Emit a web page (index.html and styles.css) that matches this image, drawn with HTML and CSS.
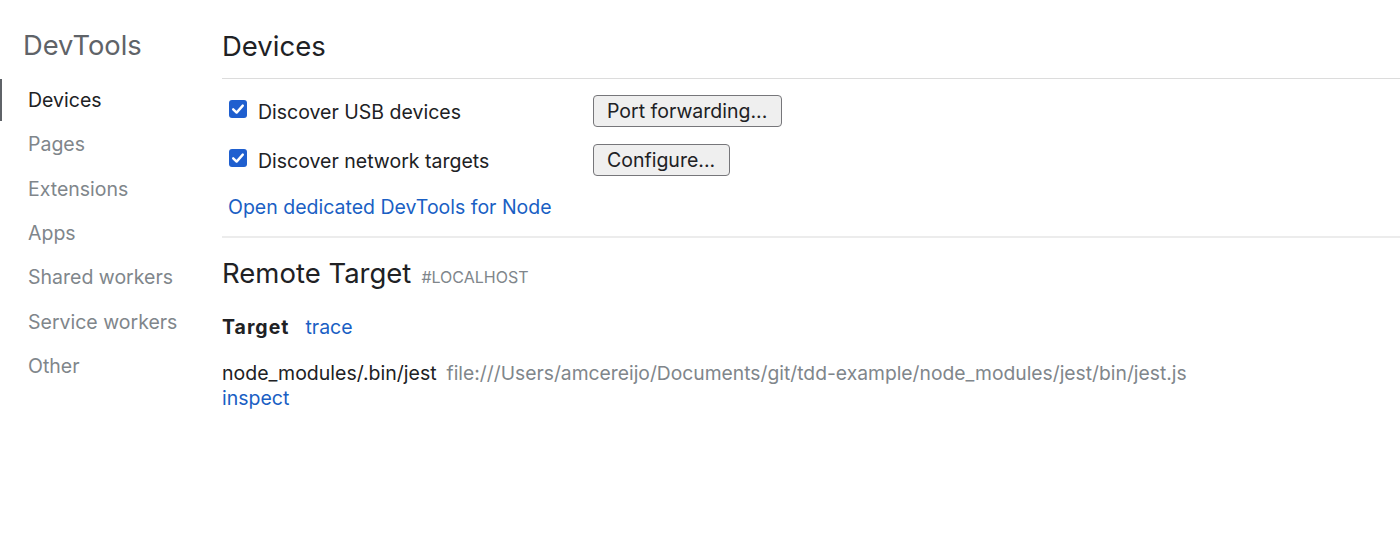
FILE: index.html
```html
<!DOCTYPE html>
<html>
<head>
<meta charset="utf-8">
<link rel="stylesheet" href="styles.css">
</head>
<body>
<div class="app">
  <aside class="sidebar">
    <h1 class="brand">DevTools</h1>
    <nav class="nav">
      <div class="nav-item active">Devices</div>
      <div class="nav-item">Pages</div>
      <div class="nav-item">Extensions</div>
      <div class="nav-item">Apps</div>
      <div class="nav-item">Shared workers</div>
      <div class="nav-item">Service workers</div>
      <div class="nav-item">Other</div>
    </nav>
  </aside>
  <main class="main">
    <header class="page-header">
      <h1 class="page-title">Devices</h1>
    </header>
    <div class="options">
      <div class="option-row">
        <label class="check">
          <span class="box"><svg viewBox="0 0 18 18" width="18" height="18"><path d="M4.2 9.3 L7.6 12.6 L13.8 5.6" fill="none" stroke="#fff" stroke-width="2.4" stroke-linecap="round" stroke-linejoin="round"/></svg></span>
          <span class="check-label">Discover USB devices</span>
        </label>
        <button class="btn">Port forwarding...</button>
      </div>
      <div class="option-row">
        <label class="check">
          <span class="box"><svg viewBox="0 0 18 18" width="18" height="18"><path d="M4.2 9.3 L7.6 12.6 L13.8 5.6" fill="none" stroke="#fff" stroke-width="2.4" stroke-linecap="round" stroke-linejoin="round"/></svg></span>
          <span class="check-label">Discover network targets</span>
        </label>
        <button class="btn">Configure...</button>
      </div>
      <a class="link node-link">Open dedicated DevTools for Node</a>
    </div>
    <section class="remote">
      <h2 class="remote-title">Remote Target <span class="host">#LOCALHOST</span></h2>
      <div class="target-head">
        <span class="target-label">Target</span>
        <a class="link">trace</a>
      </div>
      <div class="target">
        <div class="target-line">
          <span class="target-name">node_modules/.bin/jest</span>
          <span class="target-url">file:///Users/amcereijo/Documents/git/tdd-example/node_modules/jest/bin/jest.js</span>
        </div>
        <a class="link">inspect</a>
      </div>
    </section>
  </main>
</div>
</body>
</html>
```
FILE: styles.css
```css
* { box-sizing: border-box; }
html, body {
  margin: 0;
  padding: 0;
  background: #ffffff;
}
body {
  font-family: Inter, "Liberation Sans", Arial, sans-serif;
  color: #202124;
  font-size: 19.5px;
}
.app {
  display: flex;
  height: 559px;
}
.sidebar {
  width: 222px;
  flex: none;
  padding-top: 30px;
}
.brand {
  margin: 0 0 17px 0;
  padding-left: 23px;
  font-size: 27.3px;
  line-height: 32px;
  font-weight: normal;
  color: #5f6368;
}
.nav {
  display: flex;
  flex-direction: column;
  gap: 2.35px;
}
.nav-item {
  height: 42px;
  display: flex;
  align-items: center;
  padding-left: 26px;
  border-left: 2px solid transparent;
  color: #80868b;
  font-size: 19.5px;
}
.nav-item.active {
  border-left-color: #5f6368;
  color: #202124;
}
.main {
  flex: 1;
  padding-top: 30px;
}
.page-header {
  padding-bottom: 16px;
  border-bottom: 1px solid #dcdcdc;
}
.page-title {
  margin: 0;
  font-size: 27.5px;
  line-height: 32px;
  font-weight: normal;
  color: #202124;
}
.options {
  padding-top: 16px;
  padding-bottom: 17px;
  border-bottom: 2px solid #ececec;
  display: flex;
  flex-direction: column;
}
.option-row {
  display: grid;
  grid-template-columns: 371px auto;
  align-items: center;
  justify-items: start;
  margin-bottom: 17px;
}
.option-row + .option-row { margin-bottom: 19px; }
.check {
  display: flex;
  align-items: center;
  padding-left: 7px;
}
.box {
  width: 18px;
  height: 18px;
  border-radius: 3px;
  background: #1f5fcf;
  display: flex;
  margin-right: 11px;
  position: relative;
  top: -2px;
}
.check-label {
  line-height: 24px;
  position: relative;
  top: 1px;
}
.btn {
  font-family: Inter, "Liberation Sans", Arial, sans-serif;
  font-size: 19.5px;
  color: #202124;
  height: 32px;
  padding: 0 14px 0 13px;
  background: #efefef;
  border: 1px solid #76767a;
  border-radius: 4px;
  line-height: 30px;
}
.link {
  color: #1a5fc4;
  text-decoration: none;
  line-height: 24px;
}
.node-link {
  padding-left: 6px;
}
.remote {
  padding-top: 19px;
}
.remote-title {
  margin: 0;
  font-size: 27.5px;
  line-height: 32px;
  font-weight: normal;
  display: flex;
  align-items: baseline;
  gap: 10px;
}
.host {
  font-size: 16px;
  color: #80868b;
}
.target-head {
  margin-top: 22px;
  display: flex;
  gap: 16px;
  line-height: 24px;
}
.target-label {
  font-weight: 700;
  letter-spacing: 1px;
}
.target {
  margin-top: 22px;
  display: flex;
  flex-direction: column;
  align-items: flex-start;
}
.target-line {
  display: flex;
  gap: 10px;
  line-height: 25px;
}
.target-url {
  color: #80868b;
  font-size: 19.3px;
}
```
